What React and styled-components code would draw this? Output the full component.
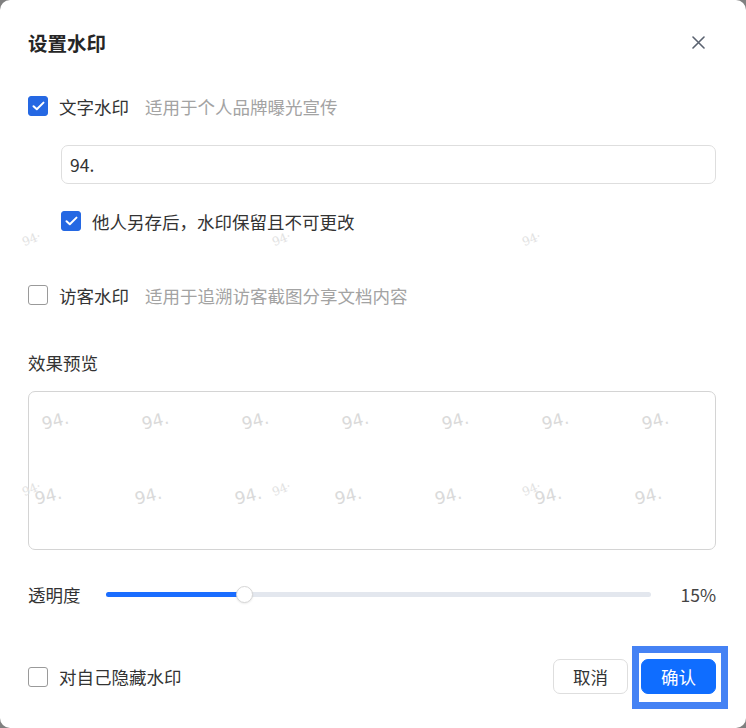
import React from "react";
import styled, { createGlobalStyle } from "styled-components";

const Global = createGlobalStyle`
  html, body { margin: 0; padding: 0; background: #808080; }
  body { font-family: "Noto Sans CJK SC", "Noto Sans", sans-serif; }
  * { box-sizing: border-box; }
`;

const Dialog = styled.div`
  position: relative;
  width: 746px;
  height: 728px;
  background: #fff;
  border-radius: 10px;
  overflow: hidden;
  padding: 0 30px 0 28px;
  display: flex;
  flex-direction: column;
  color: #333;
  font-size: 17.5px;
`;

const Header = styled.div`
  height: 84px;
  display: flex;
  align-items: center;
  justify-content: space-between;
`;

const Title = styled.h1`
  margin: 0;
  font-size: 19.5px;
  font-weight: 700;
  color: #262626;
`;

const CloseBtn = styled.button`
  border: 0;
  background: none;
  padding: 0;
  width: 20px;
  height: 20px;
  margin-right: 8px;
  display: flex;
  align-items: center;
  justify-content: center;
  cursor: pointer;
`;

const OptionRow = styled.label`
  display: flex;
  align-items: center;
  height: 24px;
  margin-top: ${(p) => p.$mt || 0}px;
  margin-left: ${(p) => p.$indent || 0}px;
  white-space: nowrap;
`;

const Box = styled.span`
  width: 20px;
  height: 20px;
  border-radius: 3px;
  flex: none;
  display: flex;
  align-items: center;
  justify-content: center;
  background: ${(p) => (p.$checked ? "#2568e3" : "#fff")};
  border: 1px solid ${(p) => (p.$checked ? "#2568e3" : "#9a9a9a")};
  margin-right: 11px;
`;

const Label = styled.span`
  color: #333;
`;

const Desc = styled.span`
  color: #a3a3a3;
  margin-left: 16px;
`;

const TextInput = styled.div`
  margin-top: 27px;
  margin-left: 33px;
  height: 39px;
  border: 1px solid #dedede;
  border-radius: 7px;
  display: flex;
  align-items: center;
  padding-left: 8px;
  color: #333;
`;

const SectionTitle = styled.div`
  margin-top: 43px;
  height: 24px;
  display: flex;
  align-items: center;
`;

const Preview = styled.div`
  position: relative;
  margin-top: 17px;
  height: 159px;
  border: 1px solid #d4d4d4;
  border-radius: 7px;
  overflow: hidden;
`;

const PreviewMark = styled.span`
  position: absolute;
  font-family: "DejaVu Sans", sans-serif;
  font-size: 17px;
  color: #dadada;
  transform: rotate(-14deg);
  transform-origin: left center;
  white-space: nowrap;
`;

const PageMarks = styled.div`
  position: absolute;
  inset: 0;
  pointer-events: none;
`;

const PageMark = styled.span`
  position: absolute;
  font-family: "DejaVu Serif", serif;
  font-size: 12px;
  color: #e2e2e2;
  transform: rotate(-22deg);
  white-space: nowrap;
`;

const SliderRow = styled.div`
  margin-top: 32px;
  height: 24px;
  display: flex;
  align-items: center;
`;

const SliderLabel = styled.span`
  width: 78px;
  flex: none;
`;

const Track = styled.div`
  position: relative;
  width: 545px;
  height: 5px;
  border-radius: 3px;
  background: #e3e7ee;
  flex: none;
`;

const Fill = styled.div`
  height: 100%;
  border-radius: 3px;
  background: #1a6dff;
`;

const Thumb = styled.div`
  position: absolute;
  top: 50%;
  width: 17px;
  height: 17px;
  margin-left: -8px;
  margin-top: -8.5px;
  border-radius: 50%;
  background: #fff;
  border: 1px solid #d6d6d6;
  box-shadow: 0 1px 2px rgba(0, 0, 0, 0.08);
`;

const Value = styled.span`
  flex: 1;
  text-align: right;
  color: #444;
`;

const Footer = styled.div`
  margin-top: 53px;
  height: 35px;
  display: flex;
  align-items: center;
  justify-content: space-between;
`;

const Buttons = styled.div`
  display: flex;
  gap: 13px;
`;

const Button = styled.button`
  position: relative;
  width: 75px;
  height: 35px;
  border-radius: 7px;
  font-family: inherit;
  font-size: 17.5px;
  cursor: pointer;
  border: 1px solid ${(p) => (p.$primary ? "#0f6dff" : "#dedede")};
  background: ${(p) => (p.$primary ? "#0f6dff" : "#fff")};
  color: ${(p) => (p.$primary ? "#fff" : "#333")};
  display: flex;
  align-items: center;
  justify-content: center;
  padding: 0;
`;

const FocusRing = styled.span`
  position: absolute;
  left: -10px;
  right: -13px;
  top: -14px;
  bottom: -16px;
  border: 7px solid #4582f4;
  pointer-events: none;
`;

const Check = () => (
  <svg width="13" height="10" viewBox="0 0 13 10" fill="none">
    <path d="M1.5 5.2 L4.8 8.3 L11.5 1.6" stroke="#fff" strokeWidth="2" strokeLinecap="round" strokeLinejoin="round" />
  </svg>
);

const CheckBox = ({ checked }) => <Box $checked={checked}>{checked && <Check />}</Box>;

const previewMarks = [];
[0, 1, 2, 3, 4, 5, 6].forEach((i) => {
  previewMarks.push({ x: 13 + i * 100, y: 22 });
  previewMarks.push({ x: 6 + i * 100, y: 97 });
});

const pageMarks = [];
[240, 490].forEach((y) => {
  [22, 272, 522].forEach((x) => pageMarks.push({ x, y: y - 8 }));
});

export default function App() {
  return (
    <>
      <Global />
      <Dialog>
        <Header>
          <Title>设置水印</Title>
          <CloseBtn aria-label="关闭">
            <svg width="13" height="13" viewBox="0 0 13 13">
              <path d="M1 1 L12 12 M12 1 L1 12" stroke="#5a6270" strokeWidth="1.6" strokeLinecap="round" />
            </svg>
          </CloseBtn>
        </Header>

        <OptionRow $mt={10}>
          <CheckBox checked />
          <Label>文字水印</Label>
          <Desc>适用于个人品牌曝光宣传</Desc>
        </OptionRow>

        <TextInput>94.</TextInput>

        <OptionRow $mt={25} $indent={33}>
          <CheckBox checked />
          <Label>他人另存后，水印保留且不可更改</Label>
        </OptionRow>

        <OptionRow $mt={50}>
          <CheckBox />
          <Label>访客水印</Label>
          <Desc>适用于追溯访客截图分享文档内容</Desc>
        </OptionRow>

        <SectionTitle>效果预览</SectionTitle>

        <Preview>
          {previewMarks.map((m, i) => (
            <PreviewMark key={i} style={{ left: m.x, top: m.y }}>94.</PreviewMark>
          ))}
        </Preview>

        <SliderRow>
          <SliderLabel>透明度</SliderLabel>
          <Track>
            <Fill style={{ width: "25.3%" }} />
            <Thumb style={{ left: "25.3%" }} />
          </Track>
          <Value>15%</Value>
        </SliderRow>

        <Footer>
          <OptionRow>
            <CheckBox />
            <Label>对自己隐藏水印</Label>
          </OptionRow>
          <Buttons>
            <Button>取消</Button>
            <Button $primary>
              确认
              <FocusRing />
            </Button>
          </Buttons>
        </Footer>

        <PageMarks>
          {pageMarks.map((m, i) => (
            <PageMark key={i} style={{ left: m.x, top: m.y }}>94·</PageMark>
          ))}
        </PageMarks>
      </Dialog>
    </>
  );
}
